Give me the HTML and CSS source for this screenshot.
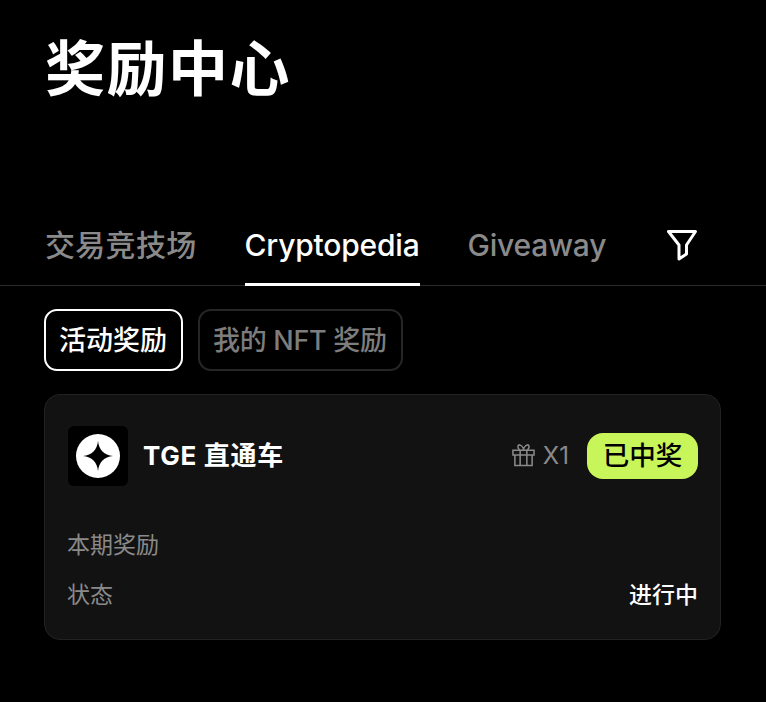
FILE: index.html
```html
<!DOCTYPE html>
<html lang="zh-CN">
<head>
    <meta charset="UTF-8">
    <meta name="viewport" content="width=device-width, initial-scale=1.0">
    <title>奖励中心</title>
    <link rel="stylesheet" href="styles.css">
</head>
<body>

    <h1 class="page-title">奖励中心</h1>

    <div class="tabs">
        <a class="tab tab-cn" href="#">交易竞技场</a>
        <a class="tab active" href="#">Cryptopedia</a>
        <a class="tab" href="#">Giveaway</a>
        <button class="filter-btn" aria-label="筛选">
            <svg width="32" height="34" viewBox="0 0 32 34" fill="none" stroke="#fff" stroke-width="3" stroke-linejoin="round">
                <path d="M2.5 3.5H29.5L20.5 17V26L13 31V17Z"/>
            </svg>
        </button>
    </div>

    <div class="chips">
        <a class="chip active" href="#">活动奖励</a>
        <a class="chip" href="#">我的 NFT 奖励</a>
    </div>

    <div class="card">
        <div class="card-head">
            <div class="logo">
                <svg width="46" height="46" viewBox="0 0 46 46">
                    <circle cx="23" cy="23" r="22" fill="#fff"/>
                    <path d="M23 8C24 17 29 22 38 23C29 24 24 29 23 38C22 29 17 24 8 23C17 22 22 17 23 8Z" fill="#000"/>
                </svg>
            </div>
            <span class="card-name">TGE 直通车</span>
            <div class="prize">
                <svg width="23" height="24" viewBox="0 0 24 24" fill="none" stroke="#8a8a8a" stroke-width="1.6">
                    <path d="M1 7H23V12H1ZM3 12V23H21V12M8.5 7V23M15.5 7V23"/>
                    <path d="M8.5 7C5 5 6 1 8 1.5C10 2 12 4.5 12 7C12 4.5 14 2 16 1.5C18 1 19 5 15.5 7"/>
                </svg>
                <span>X1</span>
            </div>
            <span class="badge">已中奖</span>
        </div>
        <div class="row">
            <span class="row-label">本期奖励</span>
        </div>
        <div class="row">
            <span class="row-label">状态</span>
            <span class="row-value">进行中</span>
        </div>
    </div>

</body>
</html>
```

FILE: styles.css
```css
* {
    margin: 0;
    padding: 0;
    box-sizing: border-box;
    font-family: Inter, 'Noto Sans CJK SC', sans-serif;
}

body {
    background: #000;
    color: #fff;
    width: 766px;
    height: 702px;
    overflow: hidden;
}

a {
    text-decoration: none;
}

.page-title {
    font-size: 60px;
    font-weight: 700;
    line-height: 80px;
    letter-spacing: 1.5px;
    padding: 29px 0 0 45px;
}

.tabs {
    display: flex;
    align-items: flex-start;
    gap: 48px;
    height: 77px;
    margin-top: 100px;
    padding-left: 45px;
    border-bottom: 1px solid #2b2b2b;
}

.tab {
    height: 77px;
    font-size: 30px;
    font-weight: 500;
    line-height: 72px;
    letter-spacing: -0.2px;
    color: #8a8a8a;
}

.tab-cn {
    letter-spacing: 0.3px;
}

.tab.active {
    color: #fff;
    border-bottom: 3px solid #fff;
}

.filter-btn {
    background: none;
    border: none;
    margin: 19px 0 0 12px;
    display: flex;
}

.chips {
    display: flex;
    gap: 15px;
    padding: 23px 0 0 44px;
}

.chip {
    height: 62px;
    padding: 0 14px 0 13px;
    border: 2px solid #262626;
    border-radius: 13px;
    font-size: 27px;
    font-weight: 500;
    line-height: 60px;
    letter-spacing: -0.3px;
    color: #7d7d7d;
}

.chip.active {
    color: #fff;
    border-color: #fff;
    letter-spacing: 0;
}

.card {
    width: 677px;
    height: 246px;
    margin: 23px 0 0 44px;
    padding: 31px 22px 0 23px;
    background: #121212;
    border: 1px solid #222;
    border-radius: 16px;
}

.card-head {
    display: flex;
    align-items: center;
    height: 60px;
    margin-bottom: 34px;
}

.logo {
    width: 60px;
    height: 60px;
    background: #000;
    border-radius: 6px;
    display: flex;
    align-items: center;
    justify-content: center;
}

.card-name {
    margin-left: 15px;
    font-size: 26px;
    font-weight: 700;
    line-height: 60px;
    letter-spacing: 0.7px;
}

.prize {
    margin-left: auto;
    padding-bottom: 2px;
    display: flex;
    align-items: center;
    gap: 8px;
    font-size: 24px;
    color: #8a8a8a;
}

.badge {
    margin-left: 18px;
    width: 111px;
    height: 46px;
    background: #c8f55a;
    border-radius: 16px;
    color: #000;
    font-size: 26.5px;
    font-weight: 500;
    line-height: 45px;
    text-align: center;
}

.row {
    display: flex;
    justify-content: space-between;
    height: 50px;
    font-size: 23px;
    line-height: 50px;
}

.row-label {
    margin-left: -1px;
    color: #8a8a8a;
}

.row-value {
    color: #fff;
    font-weight: 500;
}
```
